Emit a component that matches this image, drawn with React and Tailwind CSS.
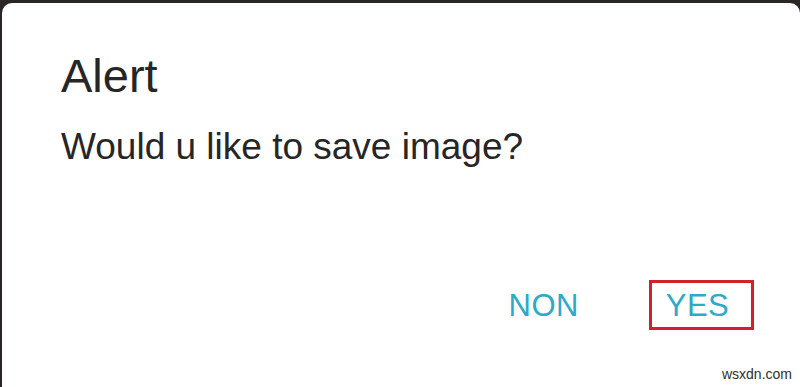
import React from "react";

const App = () => {
  return (
    <div className="w-[800px] h-[387px] bg-[#2a2626] pt-[3px] pl-[2px] overflow-hidden">
      <div
        className="relative w-full h-full bg-white rounded-tl-[10px] rounded-tr-[10px] flex flex-col text-[#262626]"
        style={{ fontFamily: '"Liberation Sans", Arial, sans-serif' }}
      >
        <div className="pl-[59px] pt-[49px] text-[47px] leading-none">Alert</div>
        <div className="pl-[59px] mt-[29px] text-[37px] leading-none">Would u like to save image?</div>

        <div className="mt-[115px] flex items-center justify-end pr-[46px] text-[31px] leading-none text-[#2eaac8]">
          <button className="mr-[70px] tracking-[0.5px]">NON</button>
          <button className="w-[105px] h-[50px] border-[3px] border-[#d3202f] flex items-center justify-center pr-[8px] tracking-[0.5px]">
            YES
          </button>
        </div>

        <div className="absolute right-[8px] bottom-[2px] text-[14px] text-[#2f2f2f]">wsxdn.com</div>
      </div>
    </div>
  );
};

export default App;
